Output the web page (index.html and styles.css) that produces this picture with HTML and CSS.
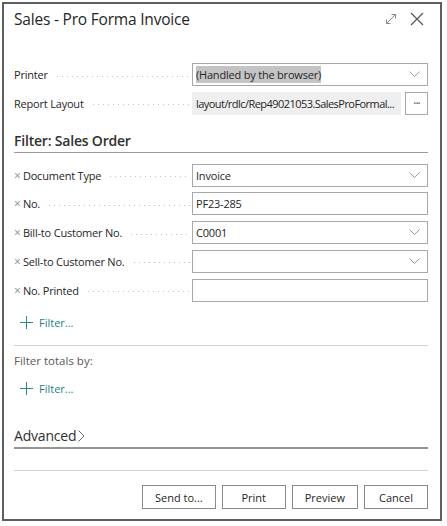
FILE: index.html
```html
<!DOCTYPE html>
<html>
<head>
<meta charset="utf-8">
<link rel="stylesheet" href="styles.css">
</head>
<body>
<div class="dialog">
  <div class="titlebar">
    <div class="title">Sales - Pro Forma Invoice</div>
    <div class="title-icons">
      <svg class="ico-expand" width="12" height="12" viewBox="0 0 12 12"><path d="M1.5 10.5 L10.5 1.5 M6.5 1.5 H10.5 V5.5 M1.5 6.5 V10.5 H5.5" fill="none" stroke="#8a8a8a" stroke-width="1"/></svg>
      <svg class="ico-close" width="14" height="14" viewBox="0 0 14 14"><path d="M1 1 L13 13 M13 1 L1 13" fill="none" stroke="#555" stroke-width="1.2"/></svg>
    </div>
  </div>

  <div class="content">
    <div class="row">
      <div class="label"><span class="ltext">Printer</span><span class="dots"></span></div>
      <div class="field select"><span class="sel">(Handled by the browser)</span><svg class="chev" width="11" height="7" viewBox="0 0 11 7"><path d="M0.5 0.5 L5.5 5.5 L10.5 0.5" fill="none" stroke="#9a9a9a" stroke-width="1"/></svg></div>
    </div>
    <div class="row">
      <div class="label"><span class="ltext">Report Layout</span><span class="dots"></span></div>
      <div class="combo">
        <div class="field readonly"><span class="clip">layout/rdlc/Rep49021053.SalesProFormal...</span></div>
        <div class="more">···</div>
      </div>
    </div>

    <div class="section-head">Filter: Sales Order</div>

    <div class="filters">
      <div class="row">
        <div class="label"><span class="x">×</span><span class="ltext">Document Type</span><span class="dots"></span></div>
        <div class="field select"><span>Invoice</span><svg class="chev" width="11" height="7" viewBox="0 0 11 7"><path d="M0.5 0.5 L5.5 5.5 L10.5 0.5" fill="none" stroke="#9a9a9a" stroke-width="1"/></svg></div>
      </div>
      <div class="row">
        <div class="label"><span class="x">×</span><span class="ltext">No.</span><span class="dots"></span></div>
        <div class="field"><span>PF23-285</span></div>
      </div>
      <div class="row">
        <div class="label"><span class="x">×</span><span class="ltext">Bill-to Customer No.</span><span class="dots"></span></div>
        <div class="field select"><span>C0001</span><svg class="chev" width="11" height="7" viewBox="0 0 11 7"><path d="M0.5 0.5 L5.5 5.5 L10.5 0.5" fill="none" stroke="#9a9a9a" stroke-width="1"/></svg></div>
      </div>
      <div class="row">
        <div class="label"><span class="x">×</span><span class="ltext">Sell-to Customer No.</span><span class="dots"></span></div>
        <div class="field select"><span></span><svg class="chev" width="11" height="7" viewBox="0 0 11 7"><path d="M0.5 0.5 L5.5 5.5 L10.5 0.5" fill="none" stroke="#9a9a9a" stroke-width="1"/></svg></div>
      </div>
      <div class="row">
        <div class="label"><span class="x">×</span><span class="ltext">No. Printed</span><span class="dots"></span></div>
        <div class="field"><span></span></div>
      </div>
    </div>

    <div class="add-filter"><svg width="13" height="13" viewBox="0 0 13 13"><path d="M6.5 0 V13 M0 6.5 H13" stroke="#2b8a8f" stroke-width="1"/></svg><span>Filter...</span></div>

    <div class="sep"></div>

    <div class="totals">Filter totals by:</div>
    <div class="add-filter second"><svg width="13" height="13" viewBox="0 0 13 13"><path d="M6.5 0 V13 M0 6.5 H13" stroke="#2b8a8f" stroke-width="1"/></svg><span>Filter...</span></div>

    <div class="section-head advanced">Advanced<svg width="7" height="12" viewBox="0 0 7 12"><path d="M0.5 0.5 L6 6 L0.5 11.5" fill="none" stroke="#666" stroke-width="1"/></svg></div>

    <div class="sep bottom"></div>

    <div class="buttons">
      <button class="btn">Send to...</button>
      <button class="btn">Print</button>
      <button class="btn">Preview</button>
      <button class="btn">Cancel</button>
    </div>
  </div>
</div>
</body>
</html>
```

FILE: styles.css
```css
* { box-sizing: border-box; }
html, body { margin: 0; padding: 0; background: #fff; }
body {
  font-family: "Open Sans", "Noto Sans", sans-serif;
  color: #212121;
}
.dialog {
  margin: 2px 0 0 2px;
  width: 440px;
  height: 519px;
  border: 2px solid #5f5f5f;
  background: #fff;
  display: flex;
  flex-direction: column;
}
.titlebar {
  display: flex;
  align-items: center;
  justify-content: space-between;
  padding: 0 16px 4px 10px;
  height: 34px;
}
.title {
  font-size: 15.5px;
  color: #262626;
  letter-spacing: -0.2px;
}
.title-icons { display: flex; align-items: center; gap: 13px; }
.content {
  padding: 25px 12px 0 10px;
  display: flex;
  flex-direction: column;
}
.row {
  display: flex;
  align-items: center;
  height: 23px;
  margin-bottom: 5.75px;
  font-size: 11px;
}
.label {
  flex: none;
  width: 178px;
  display: flex;
  align-items: center;
  color: #262626;
  white-space: nowrap;
}
.x { color: #8a8a8a; font-size: 12px; margin-right: 2px; }
.ltext { letter-spacing: -0.2px; }
.dots {
  flex: 1;
  height: 1px;
  margin: 3px 2px 0 9px;
  background-image: linear-gradient(to right, #c2c2c2 1px, transparent 1px);
  background-size: 5px 1px;
}
.field {
  flex: 1;
  min-width: 0;
  height: 23px;
  border: 1px solid #a8a8a8;
  display: flex;
  align-items: center;
  justify-content: space-between;
  padding: 0 7px 0 3px;
  color: #262626;
  letter-spacing: -0.2px;
  white-space: nowrap;
  overflow: hidden;
}
.clip { white-space: nowrap; letter-spacing: -0.55px; }
.sel { background: #c4c4c4; padding: 1px 0; }
.chev { flex: none; }
.combo { flex: 1; min-width: 0; display: flex; gap: 4px; }
.field.readonly {
  background: #efefef;
  border-color: #efefef;
  padding: 0 1px 0 3px;
}
.more {
  flex: none;
  width: 23px;
  height: 23px;
  border: 1px solid #a8a8a8;
  display: flex;
  align-items: center;
  justify-content: center;
  color: #555;
  font-size: 12px;
  letter-spacing: -1px;
}
.section-head {
  margin-top: 10px;
  font-size: 14px;
  font-weight: 600;
  color: #303030;
  padding-bottom: 2px;
  border-bottom: 1px solid #9a9a9a;
  height: 22px;
  display: flex;
  align-items: center;
  letter-spacing: -0.2px;
}
.filters { margin-top: 11px; }
.add-filter {
  display: flex;
  align-items: center;
  gap: 6px;
  margin: 7px 0 0 6px;
  height: 16px;
  font-size: 11px;
  color: #1f7f86;
}
.sep { height: 1px; background: #d2d2d2; margin-top: 15px; }
.totals {
  margin-top: 7px;
  font-size: 11.5px;
  color: #5a5a5a;
}
.add-filter.second { margin-top: 12px; }
.section-head.advanced {
  margin-top: 30px;
  height: 23px;
  font-weight: 400;
  border-bottom: 2px solid #8e959c;
  gap: 2px;
}
.sep.bottom { margin-top: 21px; }
.buttons {
  display: flex;
  justify-content: flex-end;
  gap: 6px;
  margin-top: 14px;
}
.btn {
  font-family: inherit;
  font-size: 11px;
  color: #262626;
  background: #fff;
  border: 1px solid #8a8a8a;
  height: 24px;
  min-width: 64px;
  padding: 0 12px;
}
```
